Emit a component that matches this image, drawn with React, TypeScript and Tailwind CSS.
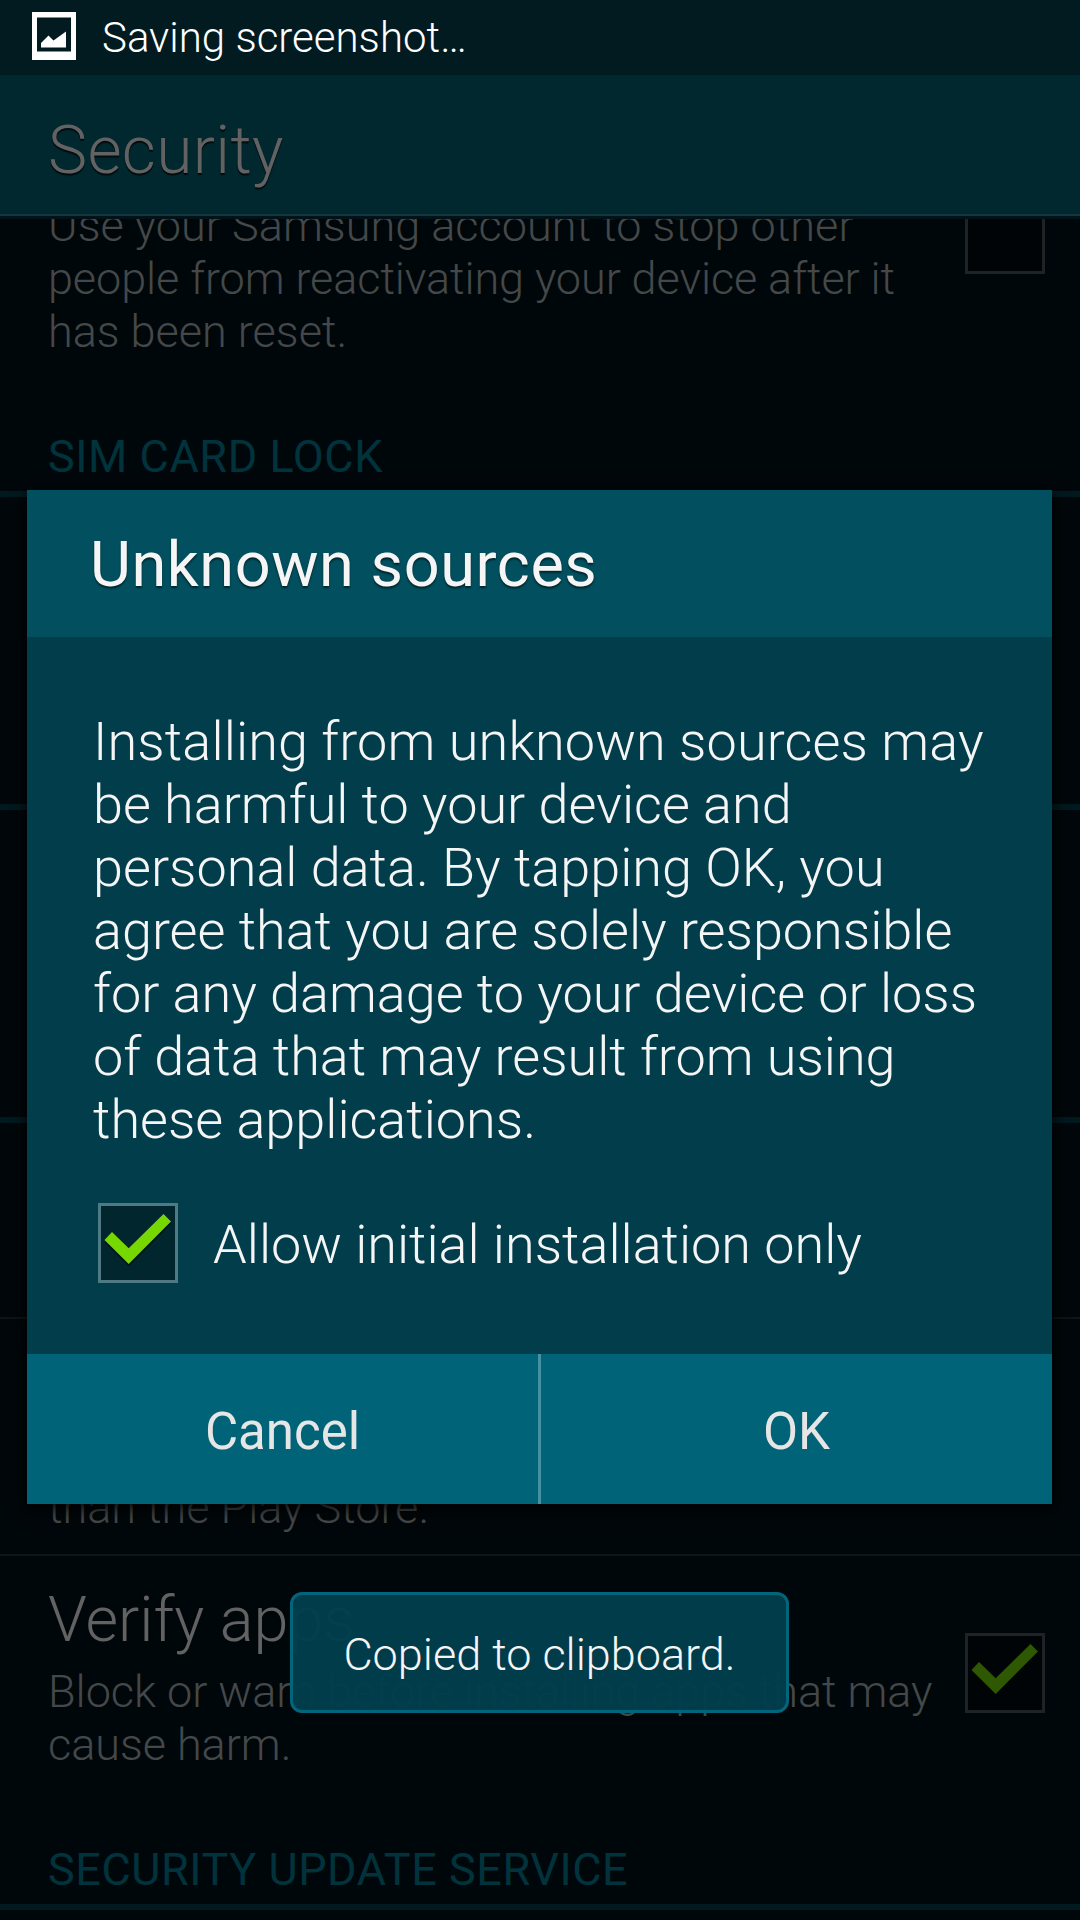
import React from "react";

function CheckBox({ checked = false, dim = false }: { checked?: boolean; dim?: boolean }) {
  return (
    <div
      className={
        dim
          ? "size-20 shrink-0 border-[3px] border-[#1f2325] bg-[#010406]"
          : "size-20 shrink-0 border-[3px] border-[#4f7983] bg-[#01262d]"
      }
    >
      {checked && (
        <svg width="74" height="74" viewBox="3 3 74 74" className="block">
          {!dim && <path d="M6.5 39.5 L14.5 31 L30.7 47.5 L65.5 13 L73.5 20.5 L30.7 63.5 Z" fill="#011519" />}
          <path d="M6.5 37 L14 29 L30.7 45.3 L65.5 11 L73 18.5 L30.7 61 Z" fill={dim ? "#2e5801" : "#77d700"} />
        </svg>
      )}
    </div>
  );
}

function SectionHeader({ title, height }: { title?: string; height: string }) {
  return (
    <div className={`${height} flex items-end border-b-[6px] border-[#011a1f] px-12 pb-2`}>
      {title && (
        <h2 className="text-[45px] leading-[53px] font-normal tracking-[0.55px] text-[#01333d]">{title}</h2>
      )}
    </div>
  );
}

export default function App() {
  return (
    <div
      className="relative flex h-[1920px] w-[1080px] flex-col overflow-hidden bg-[#00070a] font-light"
      style={{ fontFamily: "Roboto, sans-serif" }}
    >
      <div className="flex h-[75px] shrink-0 items-start bg-[#011b21] pl-8">
        <svg width="44" height="48" viewBox="0 0 44 48" className="mt-3 mr-[26px]">
          <path fillRule="evenodd" d="M0 0H44V48H0Z M5 5.5V39.5H39V5.5Z" fill="#fff" />
          <path d="M9 31 L16.5 23.5 L21.5 28.5 L34 19.5 V35.5 H9 Z" fill="#fff" />
        </svg>
        <span className="mt-[13px] text-[42px] leading-[49px] whitespace-nowrap text-white">Saving screenshot…</span>
      </div>

      <header className="h-[141px] shrink-0 border-b-2 border-[#12363c] bg-[#01282f] pt-[37px] pl-12">
        <h1 className="text-[66px] leading-[77px] tracking-[0.3px] text-[#626262] [text-shadow:0_2px_1px_#000c0f]">Security</h1>
      </header>
      <div className="h-[3px] shrink-0 bg-[#011318]" />

      <main className="min-h-0 flex-1 overflow-hidden">
        <div className="-mt-[25px] flex h-[231px] items-start justify-between pr-[35px] pl-12">
          <p className="mt-[5px] w-[880px] text-[45px] leading-[53px] text-[#454849]">
            <span className="tracking-[0.03px]">Use your Samsung account to stop other</span>
            <br />
            <span className="tracking-[-0.09px]">people from reactivating your device after it</span>
            <br />
            has been reset.
          </p>
          <CheckBox dim />
        </div>
        <SectionHeader title="SIM CARD LOCK" height="h-[72px]" />
        <SectionHeader height="h-[313px]" />
        <SectionHeader height="h-[313px]" />
        <div className="h-[196px] border-b-2 border-[#101416]" />
        <div className="flex h-[237px] items-end border-b-2 border-[#101416] px-12 pb-5">
          <p className="text-[45px] leading-[53px] text-[#454849]">than the Play Store.</p>
        </div>
        <div className="flex h-[269px] items-start justify-between pt-[27px] pr-[35px] pl-12">
          <div className="w-[905px] whitespace-nowrap">
            <h3 className="text-[63px] leading-[74px] text-[#626262]">Verify apps</h3>
            <p className="mt-[8px] text-[45px] leading-[53px] tracking-[-0.03px] text-[#454849]">
              Block or warn before installing apps that may
              <br />
              cause harm.
            </p>
          </div>
          <div className="mt-[50px]">
            <CheckBox checked dim />
          </div>
        </div>
        <SectionHeader title="SECURITY UPDATE SERVICE" height="h-[85px]" />
      </main>

      <section
        role="dialog"
        className="absolute top-[490px] left-[27px] flex h-[1014px] w-[1025px] flex-col bg-[#013d4a] shadow-[0_4px_16px_#000]"
      >
        <div className="h-[147px] bg-[#02505f] pt-[38px] pl-[63px]">
          <h2 className="text-[63px] leading-[74px] font-normal tracking-[0.57px] text-[#f5f5f5] [text-shadow:0_2px_2px_#01252c]">
            Unknown sources
          </h2>
        </div>
        <div className="flex-1 pt-[73px] pl-[66px]">
          <p className="text-[54px] leading-[63px] whitespace-nowrap text-[#f5f5f5]">
            <span className="tracking-[0.12px]">Installing from unknown sources may</span>
            <br />
            be harmful to your device and
            <br />
            personal data. By tapping OK, you
            <br />
            agree that you are solely responsible
            <br />
            for any damage to your device or loss
            <br />
            of data that may result from using
            <br />
            these applications.
          </p>
          <label className="mt-[52px] ml-[5px] flex items-center gap-[35px]">
            <CheckBox checked />
            <span className="pt-0.5 text-[54px] leading-[63px] text-[#f5f5f5]">Allow initial installation only</span>
          </label>
        </div>
        <div className="flex h-[150px] bg-[#016378] text-[51px] leading-[60px] font-normal text-[#e6e6e6]">
          <button className="flex-1 border-r-[3px] border-[#46909f] pt-[5px]">Cancel</button>
          <button className="flex-1 pt-[5px]">OK</button>
        </div>
      </section>

      <div className="absolute top-[1592px] left-[290px] flex h-[121px] w-[499px] items-center justify-center rounded-xl border-[3px] border-[#01667c] bg-[#013e4c]/97 pt-[3px] text-[45px] leading-[53px] whitespace-nowrap text-[#f5f5f5]">
        Copied to clipboard.
      </div>
    </div>
  );
}
